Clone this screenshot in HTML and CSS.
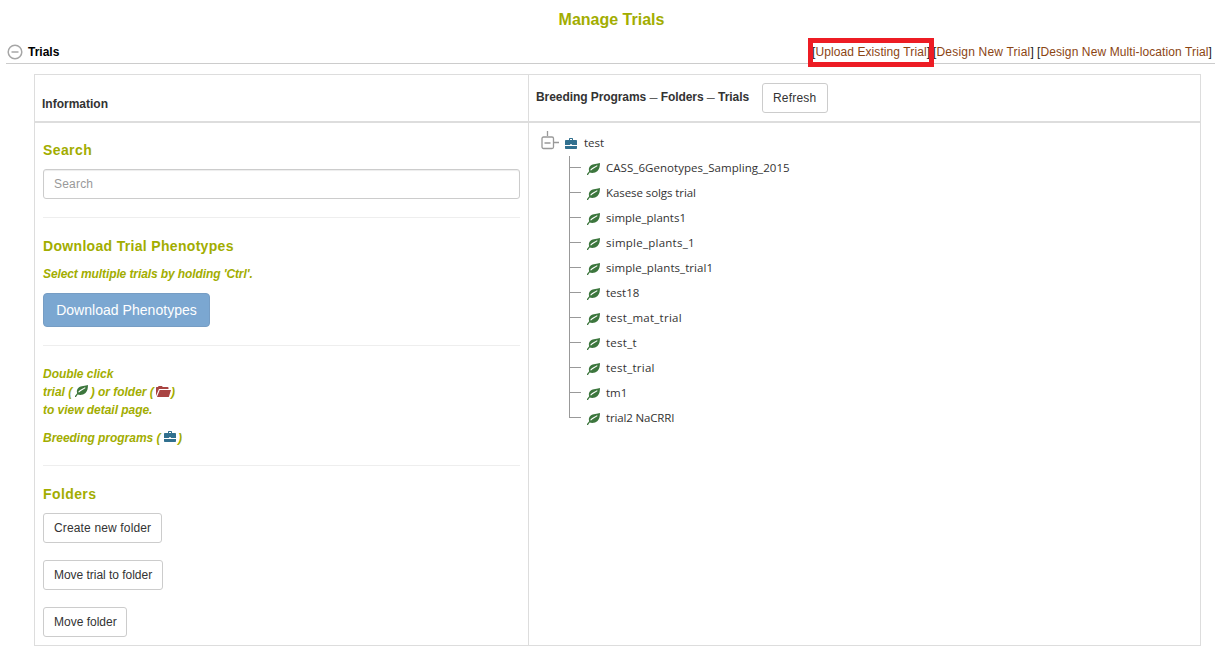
FILE: index.html
```html
<!DOCTYPE html>
<html lang="en">
<head>
<meta charset="utf-8">
<title>Manage Trials</title>
<link rel="stylesheet" href="styles.css">
</head>
<body>
<svg class="defs" width="0" height="0">
  <symbol id="leaf" viewBox="0 0 12 12" preserveAspectRatio="none">
    <path d="M12 0C9.800 1.200 5.500 .5 3.200 2.800 1.600 4.400 1.400 6.500 2 8.200L0 10.900V12h.9L2.500 9.600c2.200.9 5.400.4 7.200-1.500C11.600 6 11.900 3 12 0z"/>
    <path d="M3.300 7.300C4.800 5 6.800 4.600 9.500 2.700" fill="none" stroke="#fff" stroke-width="1"/>
  </symbol>
  <symbol id="case" viewBox="0 0 12 11">
    <path fill-rule="evenodd" d="M4 2V.8Q4 0 4.800 0h2.400Q8 0 8 .8V2h3.200q.8 0 .8.800V7H7V6.300H5V7H0V2.800Q0 2 .8 2zm1 0h2V1H5zM0 8h12v2.200q0 .8-.8.800H.8Q0 11 0 10.200z"/>
  </symbol>
  <symbol id="folder" viewBox="0 0 15 11">
    <path d="M0 10V1.500Q0 1 .6 1H2L2.600 0H6l.7 1h5q.8 0 .8.800V3H3z"/>
    <path d="M3.700 4H15l-2.200 7H1z"/>
  </symbol>
</svg>
<h1 class="title">Manage Trials</h1>
<section class="section">
  <header class="bar">
    <svg class="collapse" viewBox="0 0 16 16"><circle cx="8" cy="8" r="6.800"/><path d="M4.500 8h7"/></svg>
    <b class="bar-name">Trials</b>
    <nav class="links">
      <span class="link upload">[<a>Upload Existing Trial</a>]</span>
      <span class="link design">[<a>Design New Trial</a>]</span>
      <span class="link multi">[<a>Design New Multi-location Trial</a>]</span>
    </nav>
  </header>
  <div class="panel">
    <div class="head info"><span class="t-info">Information</span></div>
    <div class="head programs"><span class="t-programs">Breeding Programs <i class="dash">&mdash;</i> Folders <i class="dash">&mdash;</i> Trials</span><button class="btn refresh">Refresh</button></div>
    <div class="side">
      <h2>Search</h2>
      <input class="search" type="text" placeholder="Search">
      <hr>
      <h2 class="h-download">Download Trial Phenotypes</h2>
      <p class="note select">Select multiple trials by holding 'Ctrl'.</p>
      <button class="btn-primary">Download Phenotypes</button>
      <hr>
      <p class="note click">Double click<br>trial ( <svg class="i-leaf"><use href="#leaf"/></svg> ) or folder ( <svg class="i-folder"><use href="#folder"/></svg>)<br>to view detail page.</p>
      <p class="note">Breeding programs ( <svg class="i-case"><use href="#case"/></svg> )</p>
      <hr>
      <h2 class="h-folders">Folders</h2>
      <div class="actions">
        <button class="btn create">Create new folder</button>
        <button class="btn move-trial">Move trial to folder</button>
        <button class="btn move">Move folder</button>
      </div>
    </div>
    <div class="tree">
      <div class="root">
        <svg class="toggle" viewBox="0 0 18 25"><path d="M6.500 0v5M13 11.500h5M3.500 12h6"/><rect x="1" y="6" width="11.500" height="11.500" rx="1.500"/></svg>
        <svg class="i-case"><use href="#case"/></svg><span>test</span>
      </div>
      <ul class="children">
        <li><svg class="i-leaf"><use href="#leaf"/></svg><span class="cass">CASS_6Genotypes_Sampling_2015</span></li>
        <li><svg class="i-leaf"><use href="#leaf"/></svg><span class="tight">Kasese solgs trial</span></li>
        <li><svg class="i-leaf"><use href="#leaf"/></svg><span>simple_plants1</span></li>
        <li><svg class="i-leaf"><use href="#leaf"/></svg><span class="wide">simple_plants_1</span></li>
        <li><svg class="i-leaf"><use href="#leaf"/></svg><span class="cass">simple_plants_trial1</span></li>
        <li><svg class="i-leaf"><use href="#leaf"/></svg><span>test18</span></li>
        <li><svg class="i-leaf"><use href="#leaf"/></svg><span class="wide">test_mat_trial</span></li>
        <li><svg class="i-leaf"><use href="#leaf"/></svg><span class="wide">test_t</span></li>
        <li><svg class="i-leaf"><use href="#leaf"/></svg><span class="wide">test_trial</span></li>
        <li><svg class="i-leaf"><use href="#leaf"/></svg><span>tm1</span></li>
        <li><svg class="i-leaf"><use href="#leaf"/></svg><span class="tighter">trial2 NaCRRI</span></li>
      </ul>
    </div>
  </div>
</section>
</body>
</html>
```

FILE: styles.css
```css
*, *::after { box-sizing: border-box; }
body { margin: 0; background: #fff; color: #333; font: 12px/18px "Liberation Sans", Arial, sans-serif; }
.defs { display: block; height: 0; }
.title { margin: 0; padding-top: 10px; height: 40px; font-size: 16px; line-height: 20px; text-align: center; color: #a2ad00; }
.section { margin: 0 8px 0 6px; }
.bar { display: flex; align-items: center; height: 24px; border-bottom: 1px solid #ccc; color: #000; padding: 0 3px 0 1px; }
.collapse { width: 16px; height: 16px; fill: none; stroke: #a6a6a6; stroke-width: 1.5; }
.bar-name { margin-left: 5px; }
.links { display: flex; gap: 3px; margin-left: auto; color: #222; white-space: nowrap; }
.link { letter-spacing: .2px; }
.link a { color: #8b4513; }
.link.upload { position: relative; width: 118px; letter-spacing: .09px; }
.upload::after { content: ""; position: absolute; left: -4px; top: -5px; width: 126px; height: 29px; border: 5px solid #ed1c24; }
.link.multi { letter-spacing: .11px; }
.panel { display: grid; grid-template: 48px 522px / 494px 671px; width: 1167px; margin: 10px 0 0 28px; border: 1px solid #ddd; height: 572px; }
.head { display: flex; font-weight: bold; border-bottom: 2px solid #ddd; padding: 0 8px 0 7px; }
.info { border-right: 1px solid #ddd; align-items: flex-end; padding-bottom: 8px; }
.programs { align-items: flex-start; padding-top: 8px; }
.t-programs { margin-top: 5px; width: 226px; letter-spacing: -.07px; white-space: nowrap; }
.dash { display: inline-block; width: 8px; font-style: normal; font-size: 8px; line-height: 12px; vertical-align: 1px; }
.btn { height: 30px; padding: 0 0 0 10px; border: 1px solid #ccc; border-radius: 3px; background: #fff; color: #333; font: 12px/18px "Liberation Sans", Arial, sans-serif; text-align: left; white-space: nowrap; }
.refresh { width: 66px; letter-spacing: .2px; }
.side { border-right: 1px solid #ddd; padding: 18px 8px 8px; }
h2 { margin: 0 0 10px; font-size: 14px; line-height: 18px; color: #a2ad00; letter-spacing: .4px; }
.h-download { margin: 19px 0 10px; letter-spacing: .32px; }
.h-folders { margin-top: 19px; }
.search { display: block; width: 100%; height: 30px; padding: 0 10px; border: 1px solid #ccc; border-radius: 3px; box-shadow: inset 0 1px 1px rgba(0,0,0,.075); font: 12px "Liberation Sans", Arial, sans-serif; letter-spacing: .2px; }
.search::placeholder { color: #999; }
hr { margin: 18px 0; border: 0; border-top: 1px solid #eee; }
.note { margin: 0; font-weight: bold; font-style: italic; color: #a2ad00; letter-spacing: -.03px; white-space: nowrap; }
.select { margin-bottom: 10px; letter-spacing: -.1px; }
.click { margin: 19px 0 10px; }
.btn-primary { display: block; width: 167px; height: 34px; padding: 0; border: 1px solid #769dc4; border-radius: 4px; background: #7ba7d1; color: #fff; font: 14px "Liberation Sans", Arial, sans-serif; letter-spacing: .03px; }
.actions { display: flex; flex-direction: column; align-items: flex-start; gap: 17px; }
.create { width: 119px; letter-spacing: .15px; }
.move-trial { width: 120px; letter-spacing: -.03px; }
.move { width: 84px; }
.i-leaf { width: 13px; height: 12px; fill: #3c763d; flex: none; }
.i-folder { width: 15px; height: 11px; fill: #a94442; }
.i-case { width: 12px; height: 11px; fill: #31708f; flex: none; }
.note .i-leaf { vertical-align: -1px; margin-right: -1px; }
.note .i-folder { margin-left: -1px; vertical-align: -1px; }
.note .i-case { vertical-align: 0; margin-right: -1px; }
.tree { padding: 8px 0 0 12px; font: 11.5px/25px "Open Sans", sans-serif; }
.root { display: flex; align-items: center; height: 25px; }
.toggle { width: 18px; height: 25px; fill: none; stroke: #999; stroke-width: 1.3; margin-right: 6px; }
.root span { margin: -2px 0 0 7px; }
.children { list-style: none; margin: 0 0 0 28px; padding: 0; }
.children li { display: flex; align-items: center; height: 25px; padding-left: 18px; background: linear-gradient(#999,#999) 0 0 / 1px 100% no-repeat, linear-gradient(#999,#999) 0 11px / 12px 1px no-repeat; }
.children li:last-child { background-size: 1px 12px, 12px 1px; }
.children span { margin: -2px 0 0 6px; }
.cass { letter-spacing: .05px; }
.wide { letter-spacing: .25px; }
.tight { letter-spacing: -.08px; }
.tighter { letter-spacing: -.15px; }
```
